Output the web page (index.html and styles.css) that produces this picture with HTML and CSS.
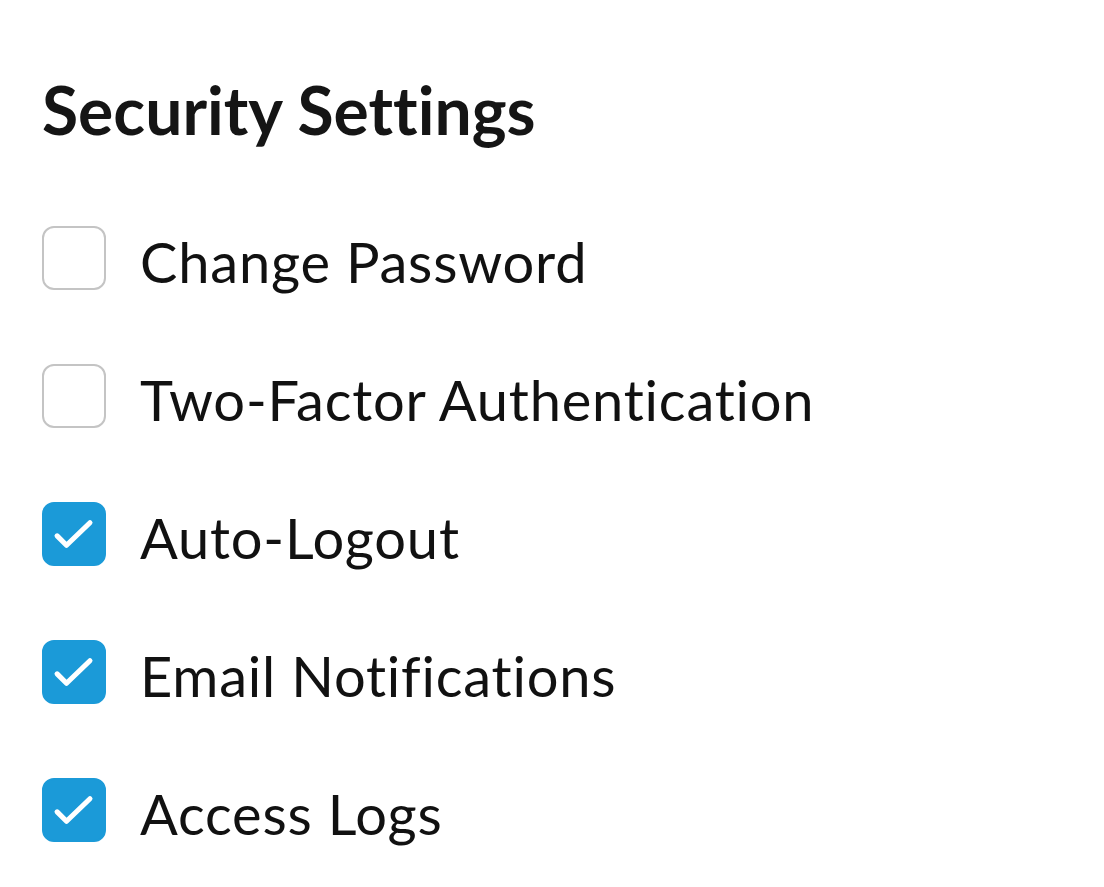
FILE: index.html
```html
<!DOCTYPE html>
<html lang="en">
<head>
<meta charset="utf-8">
<title>Security Settings</title>
<link rel="stylesheet" href="styles.css">
</head>
<body>
<main class="panel">
  <h1 class="title">Security Settings</h1>
  <ul class="options">
    <li class="option">
      <span class="box"></span>
      <span class="label">Change Password</span>
    </li>
    <li class="option">
      <span class="box"></span>
      <span class="label">Two-Factor Authentication</span>
    </li>
    <li class="option">
      <span class="box checked"><svg viewBox="0 0 64 64" class="tick"><polyline points="14,34 24,44 49,20"/></svg></span>
      <span class="label">Auto-Logout</span>
    </li>
    <li class="option">
      <span class="box checked"><svg viewBox="0 0 64 64" class="tick"><polyline points="14,34 24,44 49,20"/></svg></span>
      <span class="label">Email Notifications</span>
    </li>
    <li class="option">
      <span class="box checked"><svg viewBox="0 0 64 64" class="tick"><polyline points="14,34 24,44 49,20"/></svg></span>
      <span class="label">Access Logs</span>
    </li>
  </ul>
</main>
</body>
</html>
```
FILE: styles.css
```css
html, body {
  margin: 0;
  padding: 0;
  background: #ffffff;
}
body {
  font-family: Lato, "Noto Sans", sans-serif;
  color: #111111;
  font-variant-ligatures: none;
}
.panel {
  padding: 70px 0 40px 42px;
}
.title {
  margin: 0;
  font-size: 66px;
  font-weight: 700;
  line-height: 80px;
  color: #151515;
  font-variant-ligatures: none;
}
.options {
  list-style: none;
  margin: 76px 0 0 0;
  padding: 0;
  display: flex;
  flex-direction: column;
  gap: 74px;
}
.option {
  display: flex;
  align-items: center;
  gap: 34px;
  height: 64px;
}
.box {
  box-sizing: border-box;
  width: 64px;
  height: 64px;
  border: 2px solid #c4c4c4;
  border-radius: 12px;
  background: #ffffff;
  flex: none;
  display: flex;
}
.box.checked {
  background: #1b9ad8;
  border-color: #1b9ad8;
}
.tick {
  width: 60px;
  height: 60px;
  fill: none;
  stroke: #ffffff;
  stroke-width: 5.5;
  stroke-linecap: round;
  stroke-linejoin: round;
}
.label {
  font-size: 56px;
  line-height: 64px;
  font-weight: 400;
  letter-spacing: 0.8px;
  color: #111111;
  font-variant-ligatures: none;
  position: relative;
  top: 4px;
}
```
